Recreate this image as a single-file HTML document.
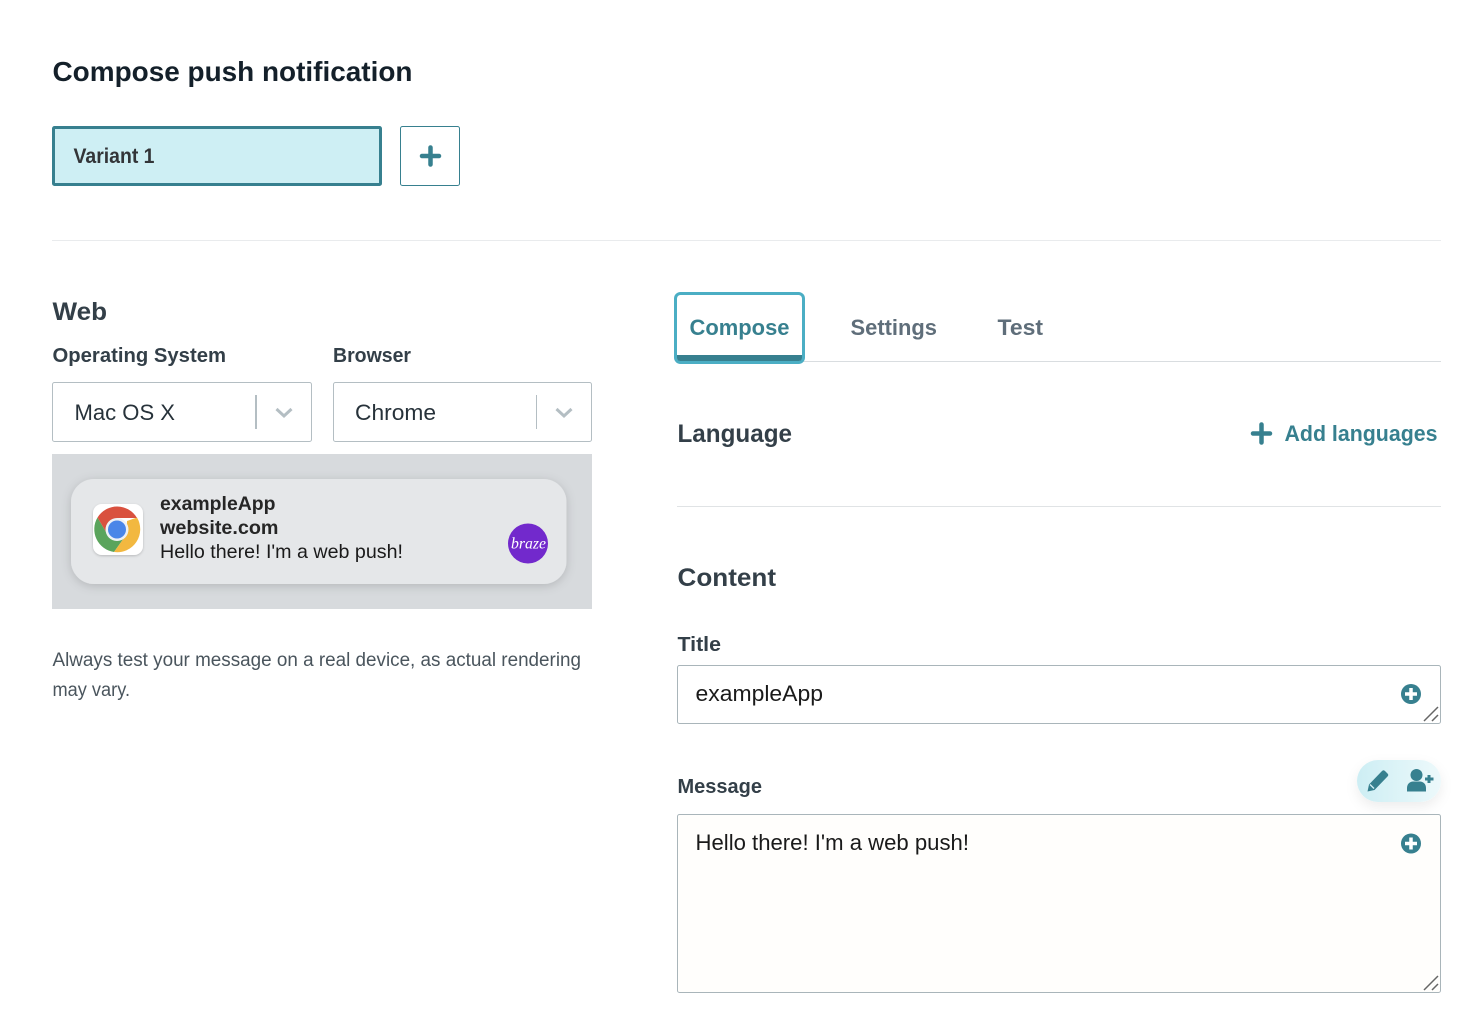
<!DOCTYPE html>
<html><head><meta charset="utf-8"><style>
html,body{margin:0;padding:0;background:#fff;width:1484px;height:1030px;overflow:hidden}
svg{display:block;position:absolute;left:0;top:0}
text{font-family:"Liberation Sans",sans-serif;white-space:pre}
.b{font-weight:700}
</style></head><body>
<svg width="1484" height="1030" viewBox="0 0 1484 1030" xmlns="http://www.w3.org/2000/svg">
<defs>
<filter id="s1" x="-10%" y="-30%" width="120%" height="160%"><feDropShadow dx="0" dy="2" stdDeviation="5" flood-color="#000" flood-opacity=".16"/></filter>
<filter id="s2" x="-30%" y="-50%" width="160%" height="220%"><feDropShadow dx="0" dy="5" stdDeviation="6" flood-color="#000" flood-opacity=".07"/></filter>
<filter id="s3" x="-20%" y="-20%" width="140%" height="140%"><feDropShadow dx="0" dy="1" stdDeviation="1.2" flood-color="#000" flood-opacity=".2"/></filter>
<linearGradient id="pill" x1="0" x2="1" y1="0" y2="0"><stop offset="0" stop-color="#cdeef4"/><stop offset="1" stop-color="#edf9fb"/></linearGradient>
</defs>
<rect width="1484" height="1030" fill="#fff"/>

<text x="52.500" y="81" class="b" font-size="28" fill="#14202a" textLength="360" lengthAdjust="spacingAndGlyphs">Compose push notification</text>

<rect x="53.500" y="127.500" width="327" height="57" fill="#ceeff4" stroke="#37808f" stroke-width="3" rx="1"/>
<text x="73.500" y="163" class="b" font-size="21" fill="#333538" textLength="81" lengthAdjust="spacingAndGlyphs">Variant 1</text>
<rect x="400.500" y="126.500" width="59" height="59" fill="#fff" stroke="#37808f" rx="2"/>
<path d="M430.500 147.500v17M422 156h17" stroke="#37808f" stroke-width="4.500" stroke-linecap="round"/>

<rect x="52" y="240" width="1389" height="1" fill="#e9ebed"/>

<text x="52.500" y="320" class="b" font-size="25" fill="#333f48" textLength="54.500" lengthAdjust="spacingAndGlyphs">Web</text>
<text x="52.500" y="362" class="b" font-size="20" fill="#333f48" textLength="173.500" lengthAdjust="spacingAndGlyphs">Operating System</text>
<text x="333" y="362" class="b" font-size="20" fill="#333f48" textLength="78" lengthAdjust="spacingAndGlyphs">Browser</text>

<rect x="52.500" y="382.500" width="259" height="59" fill="#fff" stroke="#b4bec3" rx="2"/>
<text x="74.500" y="420" font-size="22" fill="#27323a" textLength="100.500" lengthAdjust="spacingAndGlyphs">Mac OS X</text>
<rect x="255" y="395" width="2" height="34" fill="#b4bec3"/>
<path d="M276.500 409l7.500 7 7.500-7" fill="none" stroke="#b4bec3" stroke-width="3"/>

<rect x="333.500" y="382.500" width="258" height="59" fill="#fff" stroke="#b4bec3" rx="2"/>
<text x="355" y="420" font-size="22" fill="#27323a" textLength="81" lengthAdjust="spacingAndGlyphs">Chrome</text>
<rect x="536" y="395" width="1" height="34" fill="#b4bec3"/>
<path d="M556.500 409l7.500 7 7.500-7" fill="none" stroke="#b4bec3" stroke-width="3"/>

<rect x="52" y="454" width="540" height="155" fill="#d7dadd"/>
<rect x="71" y="479" width="495.500" height="105" rx="23" fill="#e5e7e9" filter="url(#s1)"/>

<rect x="93" y="504" width="50" height="51" rx="9" fill="#fff" filter="url(#s3)"/>
<path d="M97.500 517.500A23 23 0 0 0 114 552L126.500 534.500 107.500 534.500Z" fill="#5aa45c"/>
<path d="M137 517.500A23 23 0 0 1 114 552L126.500 534.500 127 521Z" fill="#f2b840"/>
<path d="M117 518H137A23 23 0 0 0 97.500 517.500L107.500 534.500 117 529.500Z" fill="#d9513f"/>
<circle cx="117" cy="529.500" r="11.500" fill="#eef1f5"/>
<circle cx="117" cy="529.500" r="9" fill="#4a86e8"/>

<text x="160" y="510" class="b" font-size="19.500" fill="#262626" textLength="115.500" lengthAdjust="spacingAndGlyphs">exampleApp</text>
<text x="160" y="534" class="b" font-size="19.500" fill="#262626" textLength="118.500" lengthAdjust="spacingAndGlyphs">website.com</text>
<text x="160" y="558" font-size="19.500" fill="#1a1a1a" textLength="243" lengthAdjust="spacingAndGlyphs">Hello there! I'm a web push!</text>

<circle cx="528" cy="543.500" r="20" fill="#7229cc"/>
<text x="511" y="548.500" font-size="16" font-style="italic" fill="#fff" textLength="35" lengthAdjust="spacingAndGlyphs" style="font-family:'Liberation Serif',serif">braze</text>

<text x="52.500" y="666" font-size="19" fill="#4a555d" textLength="528.500" lengthAdjust="spacingAndGlyphs">Always test your message on a real device, as actual rendering</text>
<text x="52.500" y="696" font-size="19" fill="#4a555d" textLength="77.500" lengthAdjust="spacingAndGlyphs">may vary.</text>

<rect x="677" y="361" width="764" height="1" fill="#d9dde0"/>
<rect x="675.500" y="293.500" width="128" height="69" rx="5" fill="#fff" stroke="#4baec4" stroke-width="3"/>
<path d="M677 355H802V358A3 3 0 0 1 799 361H680A3 3 0 0 1 677 358Z" fill="#37808f"/>
<text x="689.500" y="335" class="b" font-size="22" fill="#37808f" textLength="100" lengthAdjust="spacingAndGlyphs">Compose</text>
<text x="850.500" y="335" class="b" font-size="22" fill="#5f6e7a" textLength="86.500" lengthAdjust="spacingAndGlyphs">Settings</text>
<text x="997.500" y="335" class="b" font-size="22" fill="#5f6e7a" textLength="45.500" lengthAdjust="spacingAndGlyphs">Test</text>

<text x="677.500" y="442" class="b" font-size="25" fill="#333f48" textLength="114.500" lengthAdjust="spacingAndGlyphs">Language</text>
<path d="M1261.500 424.500v18M1253 433.500h17" stroke="#37808f" stroke-width="4.500" stroke-linecap="round"/>
<text x="1284.500" y="441" class="b" font-size="22" fill="#37808f" textLength="153" lengthAdjust="spacingAndGlyphs">Add languages</text>

<rect x="677" y="506" width="764" height="1" fill="#e0e3e5"/>

<text x="677.500" y="586" class="b" font-size="25" fill="#333f48" textLength="98.500" lengthAdjust="spacingAndGlyphs">Content</text>

<text x="677.500" y="651" class="b" font-size="20" fill="#333f48" textLength="43.500" lengthAdjust="spacingAndGlyphs">Title</text>
<rect x="677.500" y="665.500" width="763" height="58" fill="#fff" stroke="#a9b5ba" rx="2"/>
<text x="695.500" y="701" font-size="22" fill="#1a1a1a" textLength="127.500" lengthAdjust="spacingAndGlyphs">exampleApp</text>
<circle cx="1411" cy="694" r="10" fill="#37808f"/>
<path d="M1411 688v12M1405 694h12" stroke="#fff" stroke-width="3.500"/>
<path d="M1424 721l14-14M1432 721l6-6" stroke="#666" stroke-width="1.500"/>

<text x="677.500" y="793" class="b" font-size="20" fill="#333f48" textLength="84.500" lengthAdjust="spacingAndGlyphs">Message</text>
<rect x="1357" y="760" width="84" height="42" rx="21" fill="url(#pill)" filter="url(#s2)"/>
<path d="M1367.500 791.500l1.500-7 13-13.500c1-1 2-1 3 0l2.500 2.500c1 1 1 2 0 3l-13 13.500z" fill="#37808f"/>
<path d="M1370 784.500l4 4" stroke="#d4f0f5" stroke-width="1.300"/>
<circle cx="1416.500" cy="775" r="6" fill="#37808f"/>
<path d="M1407 791.500v-3.500c0-4 3-6.500 6-6.500h7c3 0 6 2.500 6 6.500v3.500z" fill="#37808f"/>
<path d="M1429 775v8M1425 779h8.500" stroke="#37808f" stroke-width="3"/>

<rect x="677.500" y="814.500" width="763" height="178" fill="#fffefc" stroke="#a9b5ba" rx="2"/>
<text x="695.500" y="850" font-size="22" fill="#1a1a1a" textLength="273.500" lengthAdjust="spacingAndGlyphs">Hello there! I'm a web push!</text>
<circle cx="1411" cy="843.500" r="10" fill="#37808f"/>
<path d="M1411 837.500v12M1405 843.500h12" stroke="#fff" stroke-width="3.500"/>
<path d="M1424 990l14-14M1432 990l6-6" stroke="#666" stroke-width="1.500"/>
</svg>
</body></html>
